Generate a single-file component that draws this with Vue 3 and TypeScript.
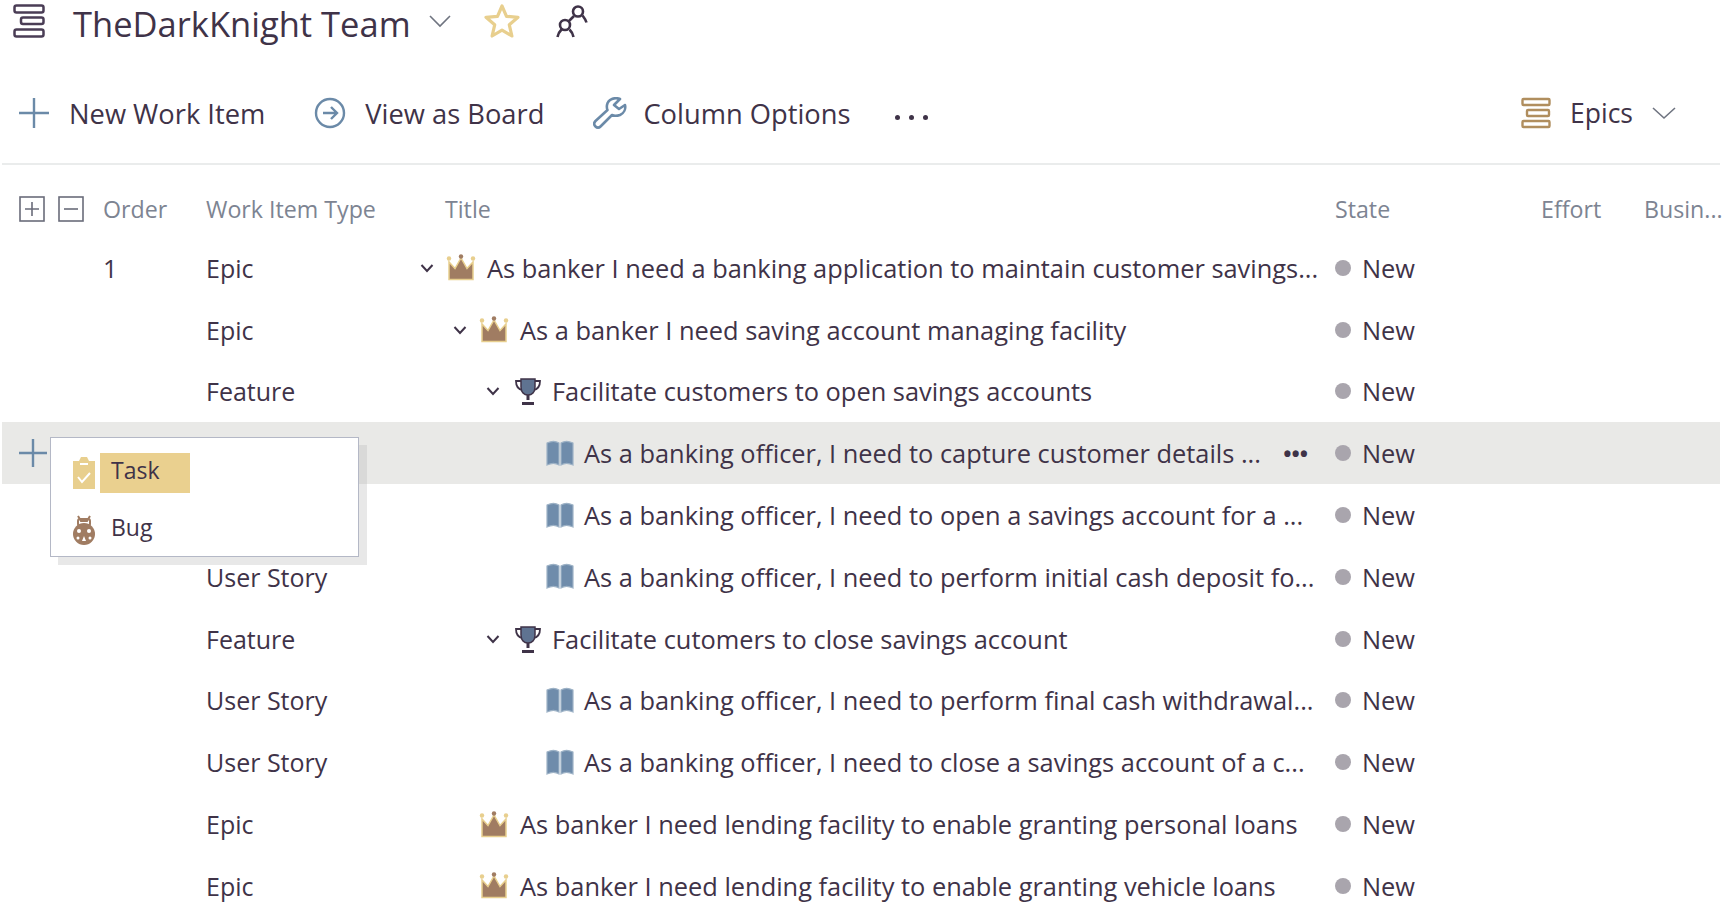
<script setup lang="ts">
type Kind = 'epic' | 'feature' | 'story'

interface Row {
  order?: string
  type: string
  kind: Kind
  level: number
  open: boolean
  title: string
  active?: boolean
}

const rows: Row[] = [
  { order: '1', type: 'Epic', kind: 'epic', level: 0, open: true, title: 'As banker I need a banking application to maintain customer savings...' },
  { type: 'Epic', kind: 'epic', level: 1, open: true, title: 'As a banker I need saving account managing facility' },
  { type: 'Feature', kind: 'feature', level: 2, open: true, title: 'Facilitate customers to open savings accounts' },
  { type: 'User Story', kind: 'story', level: 3, open: false, title: 'As a banking officer, I need to capture customer details ...', active: true },
  { type: 'User Story', kind: 'story', level: 3, open: false, title: 'As a banking officer, I need to open a savings account for a ...' },
  { type: 'User Story', kind: 'story', level: 3, open: false, title: 'As a banking officer, I need to perform initial cash deposit fo...' },
  { type: 'Feature', kind: 'feature', level: 2, open: true, title: 'Facilitate cutomers to close savings account' },
  { type: 'User Story', kind: 'story', level: 3, open: false, title: 'As a banking officer, I need to perform final cash withdrawal...' },
  { type: 'User Story', kind: 'story', level: 3, open: false, title: 'As a banking officer, I need to close a savings account of a c...' },
  { type: 'Epic', kind: 'epic', level: 1, open: false, title: 'As banker I need lending facility to enable granting personal loans' },
  { type: 'Epic', kind: 'epic', level: 1, open: false, title: 'As banker I need lending facility to enable granting vehicle loans' }
]
</script>

<template>
  <div class="page">
    <header class="team-bar">
      <svg class="backlog-icon" width="32" height="34" viewBox="0 0 32 34" fill="none" stroke="#4a3d55" stroke-width="2.500">
        <rect x="1.500" y="1.500" width="29" height="7" rx="2" />
        <rect x="8" y="13.500" width="22.500" height="6.500" rx="2" />
        <rect x="1.500" y="25.500" width="29" height="7" rx="2" />
      </svg>
      <h1 class="team-name">TheDarkKnight Team</h1>
      <svg class="team-chevron" width="24" height="14" viewBox="0 0 24 14" fill="none" stroke="#6f7480" stroke-width="1.600">
        <path d="M2 2l10 10L22 2" />
      </svg>
      <svg class="star" width="36" height="36" viewBox="0 0 36 36" fill="none" stroke="#e8cf8e" stroke-width="3.200" stroke-linejoin="round">
        <path d="M18 3l4.500 10.300 11.500 1-8.700 7.500 2.600 11.200L18 27.100 8.100 33l2.600-11.200L2 14.300l11.500-1z" />
      </svg>
      <svg class="people" width="32" height="34" viewBox="0 0 32 34" fill="none" stroke="#3f3348" stroke-width="2.600">
        <circle cx="22" cy="7.500" r="5" />
        <circle cx="9" cy="21" r="5" />
        <path d="M1.500 33c.5-3 2-5.500 4-7.500M17.500 33c-.5-3-2-5.500-4-7.500M13 17l5-5M26.500 11.500c1.500 2 3 3.500 4 7" />
      </svg>
    </header>

    <nav class="toolbar">
      <button class="tool tool-new">
        <svg width="32" height="32" viewBox="0 0 32 32" stroke="#6b8aa8" stroke-width="2.400">
          <path d="M16 1v30M1 16h30" />
        </svg>
        <span>New Work Item</span>
      </button>
      <button class="tool tool-board">
        <svg width="32" height="32" viewBox="0 0 32 32" fill="none" stroke="#6b8aa8" stroke-width="2.400">
          <circle cx="16" cy="16" r="14" />
          <path d="M9 16h14M17 10l6 6-6 6" />
        </svg>
        <span>View as Board</span>
      </button>
      <button class="tool tool-columns">
        <svg width="34" height="32" viewBox="0 0 34 32" fill="none" stroke="#6b8aa8" stroke-width="2.600" stroke-linejoin="round">
          <path d="M27 2c-5-2-12 0-13 6-.3 2 0 4 .5 5L2.500 24c-2 2-1.500 4 0 5.500s3.500 1.500 5 0L19 18c2 1 5 1 8 0 4-2 6-6 5-10l-6 4-5-4z" />
        </svg>
        <span>Column Options</span>
      </button>
      <div class="more">
        <i></i><i></i><i></i>
      </div>
      <div class="spacer"></div>
      <button class="tool tool-epics">
        <svg width="30" height="32" viewBox="0 0 30 32" fill="none" stroke="#b08e5e" stroke-width="2.400">
          <rect x="1.500" y="2" width="27" height="6" rx="1" />
          <rect x="6" y="13" width="22" height="6" rx="1" />
          <rect x="1.500" y="24" width="27" height="6" rx="1" />
        </svg>
        <span>Epics</span>
        <svg class="epics-chevron" width="26" height="14" viewBox="0 0 26 14" fill="none" stroke="#6f7480" stroke-width="1.600">
          <path d="M2 2l11 10L24 2" />
        </svg>
      </button>
    </nav>

    <section class="grid">
      <div class="row head">
        <div class="cell-tools">
          <svg class="square" width="26" height="26" viewBox="0 0 26 26" fill="none" stroke="#6a6c7a" stroke-width="1.600">
            <rect x="1" y="1" width="24" height="24" />
            <path d="M6 13h14M13 6v14" />
          </svg>
          <svg class="square" width="26" height="26" viewBox="0 0 26 26" fill="none" stroke="#6a6c7a" stroke-width="1.600">
            <rect x="1" y="1" width="24" height="24" />
            <path d="M6 13h14" />
          </svg>
        </div>
        <div class="cell-order">Order</div>
        <div class="cell-type">Work Item Type</div>
        <div class="cell-title head-title">Title</div>
        <div class="cell-state">State</div>
        <div class="cell-effort">Effort</div>
        <div class="cell-business">Busin...</div>
      </div>

      <div v-for="(row, index) in rows" :key="index" class="row item" :class="{ active: row.active }">
        <div class="cell-tools">
          <svg v-if="row.active" class="row-plus" width="28" height="28" viewBox="0 0 28 28" stroke="#6b8aa8" stroke-width="2.400">
            <path d="M14 0v28M0 14h28" />
          </svg>
        </div>
        <div class="cell-order">{{ row.order }}</div>
        <div class="cell-type">{{ row.type }}</div>
        <div class="cell-title">
          <div class="tree" :class="`level-${row.level}`">
            <svg v-if="row.open" class="twist" width="14" height="10" viewBox="0 0 14 10" fill="none" stroke="#3f3348" stroke-width="2">
              <path d="M1.500 2L7 8l5.500-6" />
            </svg>
            <span v-else class="twist"></span>

            <svg v-if="row.kind === 'epic'" class="kind kind-epic" width="30" height="27" viewBox="0 0 30 27">
              <path d="M3 25.500V8l6 6.500L15 4l6 10.500L27 8v17.500z" fill="#a07c62" stroke="#e8cf8e" stroke-width="1.500" />
              <circle cx="3" cy="4.500" r="2.200" fill="#e8cf8e" />
              <circle cx="15" cy="2.500" r="2.200" fill="#a07c62" />
              <circle cx="27" cy="4.500" r="2.200" fill="#e8cf8e" />
            </svg>
            <svg v-else-if="row.kind === 'feature'" class="kind kind-feature" width="28" height="28" viewBox="0 0 28 28">
              <path d="M7 2h14v8c0 5-3 8-7 8s-7-3-7-8z" fill="#5f7391" stroke="#3f3348" stroke-width="1.500" />
              <path d="M7 4H2c0 5 2 8 6 9M21 4h5c0 5-2 8-6 9" fill="none" stroke="#3f3348" stroke-width="1.800" />
              <path d="M14 18v5M8 26.500h12" stroke="#3f3348" stroke-width="3" />
            </svg>
            <svg v-else class="kind kind-story" width="30" height="27" viewBox="0 0 30 27">
              <path d="M2 3c4-2 9-2 12 0v22c-3-2-8-2-12 0zM16 3c3-2 8-2 12 0v22c-4-2-9-2-12 0z" fill="#6f8cab" stroke="#9db2c6" stroke-width="1.200" />
            </svg>

            <span class="title-text">{{ row.title }}</span>
          </div>
          <span v-if="row.active" class="row-more">•••</span>
        </div>
        <div class="cell-state">
          <span class="dot"></span>
          <span>New</span>
        </div>
        <div class="cell-effort"></div>
        <div class="cell-business"></div>
      </div>
    </section>

    <div class="menu">
      <div class="menu-item">
        <svg width="24" height="34" viewBox="0 0 24 34">
          <path d="M1 5h6l2-4h6l2 4h6v28H1z" fill="#e8cf8e" />
          <path d="M8 8h8M6 21l4 5 8-9" fill="none" stroke="#fff" stroke-width="2" />
        </svg>
        <span class="menu-label selected">Task</span>
      </div>
      <div class="menu-item">
        <svg width="24" height="30" viewBox="0 0 24 30">
          <path d="M6 1l3 5h6l3-5" fill="none" stroke="#a07c62" stroke-width="2" />
          <rect x="6" y="4" width="12" height="7" rx="2" fill="none" stroke="#a07c62" stroke-width="2" />
          <circle cx="12" cy="19" r="11" fill="#a07c62" />
          <circle cx="7" cy="16" r="2" fill="#fff" />
          <circle cx="17" cy="16" r="2" fill="#fff" />
          <circle cx="6" cy="23" r="1.500" fill="#fff" />
          <circle cx="18" cy="23" r="1.500" fill="#fff" />
          <path d="M12 21l2 5h-4z" fill="#fff" />
        </svg>
        <span class="menu-label">Bug</span>
      </div>
    </div>
  </div>
</template>

<style scoped>
.page {
  position: relative;
  width: 1725px;
  height: 907px;
  overflow: hidden;
  background: #fff;
  color: #3f3348;
  font-family: "Open Sans", "Noto Sans", sans-serif;
  font-size: 25.400px;
}

.team-bar {
  display: flex;
  align-items: center;
  height: 42px;
  padding-left: 13px;
}

.team-name {
  margin: 5px 0 0 28px;
  font-size: 34.500px;
  font-weight: 400;
  line-height: 40px;
  white-space: nowrap;
}

.team-chevron {
  margin-left: 17px;
}

.star {
  margin-left: 32px;
}

.people {
  margin-left: 36px;
}

.toolbar {
  display: flex;
  align-items: center;
  height: 72px;
  margin-top: 35px;
  padding-left: 18px;
  font-size: 27.300px;
}

.tool {
  display: flex;
  align-items: center;
  padding: 0;
  border: 0;
  background: none;
  color: inherit;
  font: inherit;
  white-space: nowrap;
}

.tool-new span {
  margin-left: 19px;
}

.tool-board {
  margin-left: 49px;
}

.tool-board span {
  margin-left: 19px;
}

.tool-columns {
  margin-left: 49px;
}

.tool-columns span {
  margin-left: 16px;
}

.more {
  display: flex;
  gap: 9px;
  margin: 8px 0 0 45px;
}

.more i {
  width: 5px;
  height: 5px;
  border-radius: 50%;
  background: #3f3348;
}

.spacer {
  flex: 1;
}

.tool-epics {
  padding-right: 48px;
  font-size: 26.500px;
}

.tool-epics span {
  margin-left: 19px;
}

.epics-chevron {
  margin-left: 18px;
}

.grid {
  margin: 14px 5px 0 2px;
  border-top: 2px solid #eaecec;
}

.row {
  display: grid;
  grid-template-columns: 101px 103px 209px 920px 206px 103px 1fr;
  align-items: center;
  white-space: nowrap;
}

.head {
  box-sizing: border-box;
  height: 72px;
  padding-top: 15px;
  color: #7d8492;
  font-size: 23.200px;
}

.item {
  height: 61.800px;
}

.item.active {
  background: #e9e9e7;
}

.item .cell-type {
  font-size: 25px;
}

.cell-tools {
  display: flex;
  align-items: center;
  gap: 13px;
  padding-left: 17px;
}

.cell-title {
  display: flex;
  align-items: center;
  justify-content: space-between;
  padding-right: 27px;
}

.head-title {
  padding-left: 30px;
}

.tree {
  display: flex;
  align-items: center;
}

.level-1 {
  padding-left: 33px;
}

.level-2 {
  padding-left: 66px;
}

.level-3 {
  padding-left: 99px;
}

.twist {
  flex: none;
  width: 14px;
  margin: 0 12px 0 5px;
}

.kind {
  flex: none;
}

.kind-epic {
  margin-right: 11px;
}

.kind-feature {
  margin: 0 10px 0 2px;
}

.kind-story {
  margin-right: 9px;
}

.row-more {
  font-size: 22px;
  font-weight: 700;
  line-height: 1;
}

.cell-state {
  display: flex;
  align-items: center;
  gap: 11px;
}

.dot {
  width: 16px;
  height: 16px;
  border-radius: 50%;
  background: #a9a5ad;
}

.menu {
  position: absolute;
  left: 50px;
  top: 437px;
  box-sizing: border-box;
  width: 309px;
  height: 120px;
  padding: 15px 0 0 21px;
  border: 1.500px solid #b4b8c6;
  background: #fff;
  box-shadow: 8px 8px 0 rgba(190, 190, 190, 0.35);
}

.menu-item {
  display: flex;
  align-items: center;
  gap: 4px;
  height: 40px;
  margin-bottom: 17px;
}

.menu-label {
  box-sizing: border-box;
  width: 90px;
  height: 40px;
  padding-left: 11px;
  font-size: 23px;
  line-height: 34px;
}

.menu-label.selected {
  background: #ead08f;
}
</style>

<style>
body {
  margin: 0;
}
</style>
